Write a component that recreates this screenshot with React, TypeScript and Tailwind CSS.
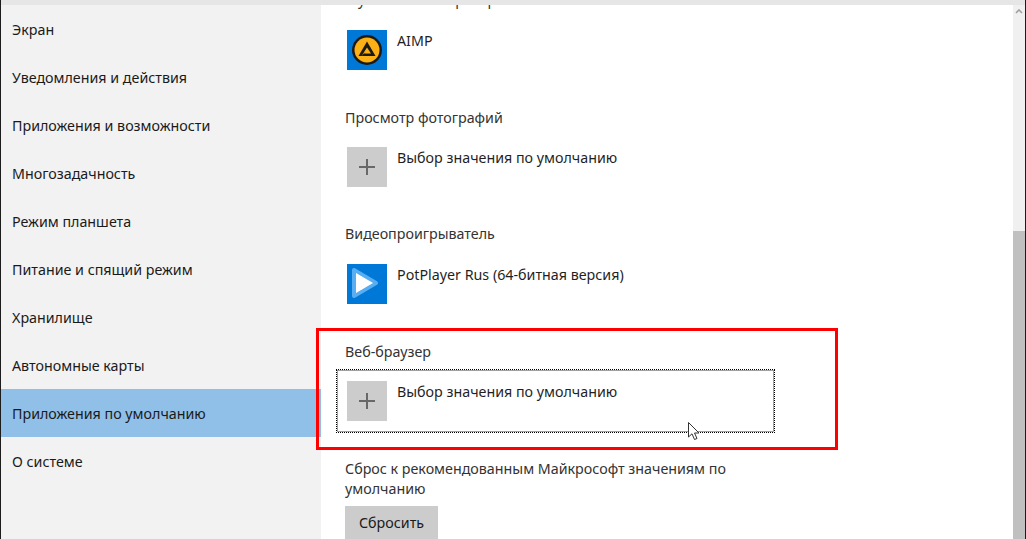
const items = ["Экран","Уведомления и действия","Приложения и возможности","Многозадачность","Режим планшета","Питание и спящий режим","Хранилище","Автономные карты","Приложения по умолчанию","О системе"];

function PlusIcon() {
  return (
    <div className="w-10 h-10 bg-[#cccccc] flex items-center justify-center shrink-0">
      <svg width="16" height="16" viewBox="0 0 16 16"><path d="M8 0V16M0 8H16" stroke="#686868" strokeWidth="2" fill="none"/></svg>
    </div>
  );
}

function Aimp() {
  return (
    <div className="w-10 h-10 bg-[#0078d7] flex items-center justify-center shrink-0">
      <svg width="40" height="40" viewBox="0 0 40 40">
        <circle cx="20" cy="20" r="15" fill="#1c1a16"/>
        <circle cx="20" cy="20" r="12.5" fill="#fbb016"/>
        <path d="M20 11.5L28.5 26H11.5Z" fill="#1c1a16"/>
        <path d="M20 17.5L24 23.5H17L19 21L14.5 26L20 17.5Z" fill="#fbb016"/>
      </svg>
    </div>
  );
}

function Pot() {
  return (
    <div className="w-10 h-10 bg-[#0078d7] flex items-center justify-center shrink-0">
      <svg width="40" height="40" viewBox="0 0 40 40">
        <path d="M7 6L29 19L7 32Z" fill="#ffffff" stroke="#58aef2" strokeWidth="4" strokeLinejoin="round"/>
        <path d="M9 9L26 19L9 29Z" fill="#ffffff"/>
      </svg>
    </div>
  );
}

function Row({ icon, label }: { icon: React.ReactNode; label: string }) {
  return (
    <div className="flex gap-[10px] h-10">
      {icon}
      <span className="text-[14.27px] leading-5 pt-[1px] text-[#1f1f1f]">{label}</span>
    </div>
  );
}

export default function App() {
  return (
    <div className="relative w-[1026px] h-[539px] overflow-hidden bg-white flex flex-col border-l border-r border-[#1c1c1c] font-['Noto_Sans','Open_Sans',sans-serif]">
      <div className="h-[5px] bg-[#e6e6e6] shrink-0 relative z-10" />
      <div className="flex flex-1 min-h-0">
        <nav className="w-[320px] bg-[#f2f2f2] shrink-0">
          {items.map((t, i) => (
            <div key={t} className={`h-12 flex items-center pl-[11px] pt-[2px] text-[14.27px] text-[#1a1a1a] ${i === 8 ? "bg-[#90c0e8]" : ""}`}>{t}</div>
          ))}
        </nav>
        <main className="flex-1 min-w-0 overflow-hidden pl-6 -mt-[15px] text-[14.27px] text-[#333333]">
          <p className="h-5 leading-5">Музыкальный проигрыватель</p>
          <div className="mt-[20px] pl-[2px]"><Row icon={<Aimp />} label="AIMP" /></div>
          <p className="mt-[38px] h-5 leading-5">Просмотр фотографий</p>
          <div className="mt-[19px] pl-[2px]"><Row icon={<PlusIcon />} label="Выбор значения по умолчанию" /></div>
          <p className="mt-[37px] h-5 leading-5">Видеопроигрыватель</p>
          <div className="mt-[20px] pl-[2px]"><Row icon={<Pot />} label="PotPlayer Rus (64-битная версия)" /></div>
          <p className="mt-[38px] h-5 leading-5">Веб-браузер</p>
          <div className="mt-[7px] -ml-[9px] w-[439px] h-[64px] border border-dotted border-black shadow-[inset_0_0_0_1px_#a0a0a0] pl-[10px] pt-[11px]">
            <Row icon={<PlusIcon />} label="Выбор значения по умолчанию" />
          </div>
          <p className="mt-[26px] w-[400px] leading-5">Сброс к рекомендованным Майкрософт значениям по умолчанию</p>
          <button className="mt-[7px] w-[93px] h-[33px] bg-[#cccccc] text-[#1a1a1a] text-[14.27px] block">Сбросить</button>
        </main>
        <aside className="w-3 bg-[#f0f0f0] shrink-0 flex flex-col">
          <div className="h-[226px] flex justify-center pt-[4px]">
            <svg width="8" height="5" viewBox="0 0 8 5"><path d="M1 4L4 1L7 4" stroke="#a0a0a0" strokeWidth="1.6" fill="none"/></svg>
          </div>
          <div className="flex-1 bg-[#c0c0c0]" />
        </aside>
      </div>
      <div className="absolute left-[315px] top-[328px] w-[522px] h-[122px] border-[3px] border-[#ff0000]" />
      <svg className="absolute left-[686px] top-[421px]" width="14" height="21" viewBox="0 0 14 21">
        <path d="M1.5 1.5V16L5 12.8L7.5 18.5L10 17.5L7.5 12H12Z" fill="#ffffff" stroke="#333333" strokeWidth="1"/>
      </svg>
    </div>
  );
}
